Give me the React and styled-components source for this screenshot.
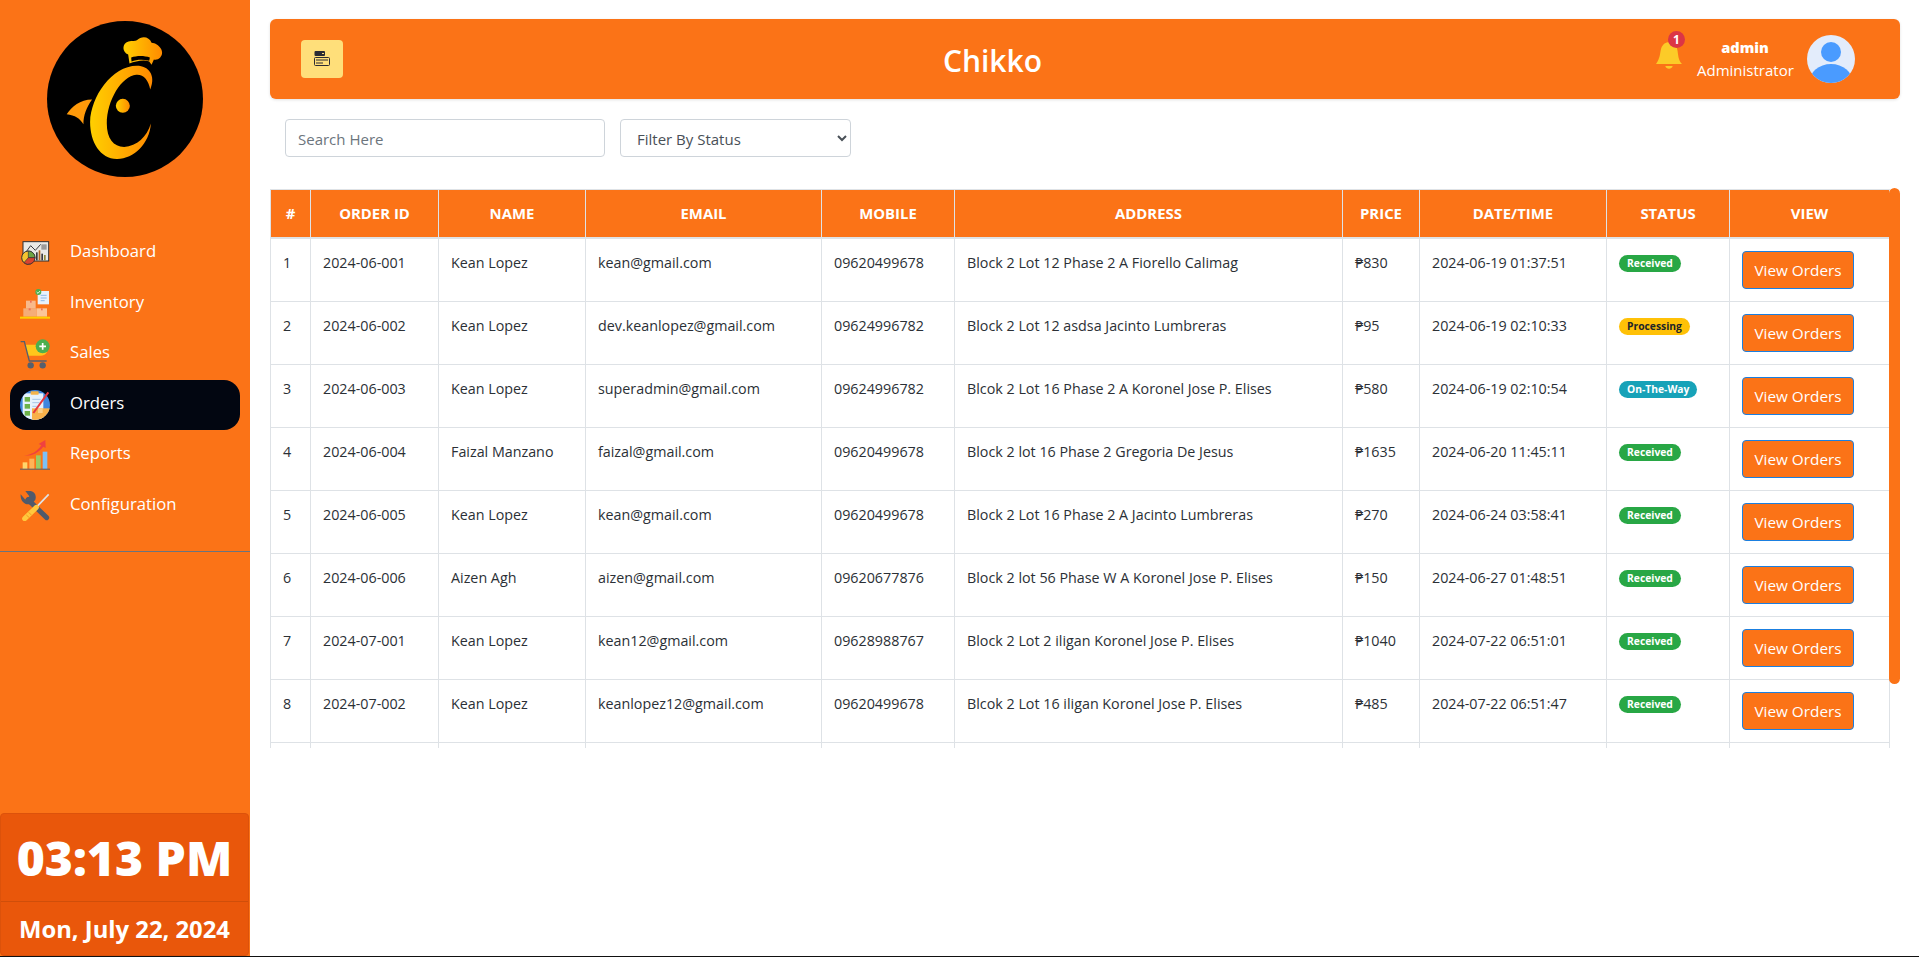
import React from 'react';
import styled, { createGlobalStyle } from 'styled-components';

const ORANGE = '#fb7317';
const LINE = '#dee2e6';

const GlobalStyle = createGlobalStyle`
  html, body { margin: 0; padding: 0; background: #fff; }
  body { font-family: "Open Sans", "Noto Sans", sans-serif; color: #212529; overflow: hidden; }
  * { box-sizing: border-box; }
`;

const Page = styled.div`
  display: flex;
  height: 957px;
  border-bottom: 1px solid #111;
`;

const Sidebar = styled.aside`
  width: 250px;
  flex: none;
  background: ${ORANGE};
  display: flex;
  flex-direction: column;
`;

const LogoWrap = styled.div`
  height: 228px;
  padding: 21px 0 0 47px;
`;

const Nav = styled.nav`
  display: grid;
  grid-auto-rows: 50.5px;
  padding: 0 10px;
`;

const NavItem = styled.a`
  height: 50px;
  display: flex;
  align-items: center;
  gap: 20px;
  padding-left: 10px;
  border-radius: 16px;
  color: #fff;
  font-size: 16.7px;
  background: ${p => (p.$active ? '#020611' : 'transparent')};
  svg { width: 30px; height: 30px; flex: none; }
  span { padding-bottom: 5px; }
`;

const SideRule = styled.hr`
  margin: 20px 0 0;
  border: 0;
  border-top: 1px solid #69747f;
`;

const Clock = styled.div`
  margin-top: auto;
  width: 249px;
  height: 143px;
  background: #e9570b;
  border: 1px solid #dc520b;
  border-radius: 4px;
  color: #fff;
  display: flex;
  flex-direction: column;
  text-align: center;
`;

const ClockTime = styled.div`
  height: 88px;
  border-bottom: 1px solid #cf4e0a;
  font-size: 48px;
  font-weight: 800;
  line-height: 88px;
  white-space: nowrap;
`;

const ClockDate = styled.div`
  font-size: 23.8px;
  font-weight: 700;
  line-height: 54px;
  white-space: nowrap;
`;

const Main = styled.main`
  flex: 1;
  min-width: 0;
  padding: 19px 19px 0 20px;
`;

const TopBar = styled.header`
  height: 80px;
  background: ${ORANGE};
  border-radius: 6px;
  box-shadow: 0 1px 3px rgba(0, 0, 0, 0.12);
  padding: 0 45px 0 31px;
  display: flex;
  align-items: center;
  justify-content: space-between;
`;

const ToggleButton = styled.button`
  width: 42px;
  height: 38px;
  padding: 0;
  border: 0;
  border-radius: 4px;
  background: #ffdf7a;
  display: flex;
  align-items: center;
  justify-content: center;
`;

const Title = styled.h1`
  margin: 3px 14px 0 0;
  color: #fff;
  font-size: 30px;
  font-weight: 600;
  line-height: 1;
`;

const UserArea = styled.div`
  display: flex;
  align-items: center;
`;

const BellWrap = styled.div`
  position: relative;
  width: 26px;
  height: 30px;
  margin: -10px 15px 0 0;
`;

const BellBadge = styled.span`
  position: absolute;
  top: -8px;
  left: 12px;
  width: 17px;
  height: 17px;
  border-radius: 50%;
  background: #dc3545;
  color: #fff;
  font-size: 12px;
  font-weight: 700;
  line-height: 17px;
  text-align: center;
`;

const UserText = styled.div`
  width: 96px;
  margin: -1px 14px 0 0;
  color: #fff;
  text-align: center;
  white-space: nowrap;
`;

const UserName = styled.div`
  font-size: 14.6px;
  font-weight: 800;
  line-height: 24px;
`;

const UserRole = styled.div`
  font-size: 15px;
  line-height: 23px;
`;

const Filters = styled.div`
  display: flex;
  gap: 15px;
  padding: 20px 0 0 15px;
`;

const SearchInput = styled.input`
  width: 320px;
  height: 38px;
  padding: 1px 12px 0;
  border: 1px solid #ced4da;
  border-radius: 4px;
  font: 15px "Open Sans", sans-serif;
  &::placeholder { color: #6c757d; opacity: 1; }
`;

const StatusSelect = styled.select`
  width: 231px;
  height: 38px;
  padding: 1px 12px 0;
  border: 1px solid #ced4da;
  border-radius: 4px;
  background: #fff;
  color: #495057;
  font: 15px "Open Sans", sans-serif;
`;

const TableArea = styled.div`
  position: relative;
  margin: 32px 0 0;
  width: 1630px;
`;

const TableScroll = styled.div`
  height: 559px;
  overflow-y: auto;
  scrollbar-width: none;
`;

const ScrollThumb = styled.div`
  position: absolute;
  top: -1px;
  right: 0;
  width: 11px;
  height: 496px;
  border-radius: 6px;
  background: ${ORANGE};
`;

const Table = styled.table`
  width: 1619px;
  table-layout: fixed;
  border-collapse: collapse;
  font-size: 14.3px;
`;

const Head = styled.th`
  height: 48px;
  padding: 0 4px;
  background: ${ORANGE};
  color: #fff;
  font-size: 14.9px;
  font-weight: 700;
  text-align: center;
  border: 1px solid ${LINE};
  border-bottom-width: 2px;
`;

const Cell = styled.td`
  height: 63px;
  padding: 13px 12px 11px;
  vertical-align: top;
  line-height: 21px;
  border: 1px solid ${LINE};
  white-space: nowrap;
  overflow: hidden;
  color: #2b3036;
`;

const ButtonCell = styled(Cell)`
  padding: 12px;
`;

const STATUS_COLOURS = {
  Received: { bg: '#28a745', fg: '#fff' },
  Processing: { bg: '#ffc107', fg: '#212529' },
  'On-The-Way': { bg: '#17a2b8', fg: '#fff' },
};

const StatusPill = styled.span`
  display: inline-block;
  margin-top: 3px;
  padding: 0 8px;
  height: 17px;
  border-radius: 9px;
  background: ${p => STATUS_COLOURS[p.$status].bg};
  color: ${p => STATUS_COLOURS[p.$status].fg};
  font-size: 10.3px;
  font-weight: 700;
  line-height: 17px;
  vertical-align: top;
`;

const ViewButton = styled.button`
  width: 112px;
  height: 38px;
  padding: 0;
  background: ${ORANGE};
  border: 1px solid #1a7fe0;
  border-radius: 4px;
  color: #fff;
  font: 15.3px "Open Sans", sans-serif;
`;

const COLUMNS = [
  ['#', 40], ['ORDER ID', 128], ['NAME', 147], ['EMAIL', 236], ['MOBILE', 133],
  ['ADDRESS', 388], ['PRICE', 77], ['DATE/TIME', 187], ['STATUS', 123], ['VIEW', 160],
];

const ORDERS = [
  ['2024-06-001', 'Kean Lopez', 'kean@gmail.com', '09620499678', 'Block 2 Lot 12 Phase 2 A Fiorello Calimag', '₱830', '2024-06-19 01:37:51', 'Received'],
  ['2024-06-002', 'Kean Lopez', 'dev.keanlopez@gmail.com', '09624996782', 'Block 2 Lot 12 asdsa Jacinto Lumbreras', '₱95', '2024-06-19 02:10:33', 'Processing'],
  ['2024-06-003', 'Kean Lopez', 'superadmin@gmail.com', '09624996782', 'Blcok 2 Lot 16 Phase 2 A Koronel Jose P. Elises', '₱580', '2024-06-19 02:10:54', 'On-The-Way'],
  ['2024-06-004', 'Faizal Manzano', 'faizal@gmail.com', '09620499678', 'Block 2 lot 16 Phase 2 Gregoria De Jesus', '₱1635', '2024-06-20 11:45:11', 'Received'],
  ['2024-06-005', 'Kean Lopez', 'kean@gmail.com', '09620499678', 'Block 2 Lot 16 Phase 2 A Jacinto Lumbreras', '₱270', '2024-06-24 03:58:41', 'Received'],
  ['2024-06-006', 'Aizen Agh', 'aizen@gmail.com', '09620677876', 'Block 2 lot 56 Phase W A Koronel Jose P. Elises', '₱150', '2024-06-27 01:48:51', 'Received'],
  ['2024-07-001', 'Kean Lopez', 'kean12@gmail.com', '09628988767', 'Block 2 Lot 2 iligan Koronel Jose P. Elises', '₱1040', '2024-07-22 06:51:01', 'Received'],
  ['2024-07-002', 'Kean Lopez', 'keanlopez12@gmail.com', '09620499678', 'Blcok 2 Lot 16 iligan Koronel Jose P. Elises', '₱485', '2024-07-22 06:51:47', 'Received'],
];

const Logo = () => (
  <svg width="156" height="156" viewBox="141 63 467 467">
    <defs>
      <linearGradient id="logoGold" x1="0" x2="1" y1="0" y2="0">
        <stop offset="0" stopColor="#ffd000" />
        <stop offset="1" stopColor="#ff8a00" />
      </linearGradient>
    </defs>
    <circle cx="374.5" cy="296.5" r="233.5" fill="#000" />
    <path fill="url(#logoGold)" d="M450 268C445 240 430 222 408 224C365 228 320 300 320 370C320 415 340 440 372 440C410 438 440 410 452 370C448 430 400 477 350 476C300 475 270 425 270 365C272 290 335 197 410 197C445 197 468 225 450 268Z" />
    <circle cx="368" cy="317" r="21" fill="url(#logoGold)" />
    <path fill="#ff9a0a" d="M276 298C240 298 215 320 200 342C225 345 240 355 250 372C250 345 260 320 276 298Z" />
    <path fill="url(#logoGold)" d="M384 163C366 156 364 130 385 124C396 122 405 124 410 121C425 106 447 110 454 128C476 130 496 155 480 172C474 178 466 180 461 178L454 194L447 184C430 178 405 184 388 190Z" />
    <path fill="#000" d="M393 172C410 166 432 166 449 172L447 182C430 178 410 178 394 184Z" />
  </svg>
);

const DashboardIcon = () => (
  <svg viewBox="60 55 90 90">
    <rect x="69" y="66" width="77" height="58" fill="#e9e9e6" stroke="#2f2f33" strokeWidth="3" />
    <polyline points="76,100 92,78 106,92 122,74" fill="none" stroke="#3a3a3e" strokeWidth="3" />
    <rect x="124" y="74" width="16" height="16" fill="#9a9a9a" />
    <rect x="108" y="98" width="5" height="24" fill="#3a3a3e" />
    <rect x="116" y="92" width="5" height="30" fill="#b5651d" />
    <rect x="124" y="102" width="5" height="20" fill="#3a3a3e" />
    <rect x="132" y="106" width="5" height="16" fill="#8f8a3b" />
    <circle cx="85" cy="114" r="20" fill="#f4c430" stroke="#2f2f33" strokeWidth="3" />
    <path d="M85 114V94A20 20 0 0 1 105 114Z" fill="#6da544" stroke="#2f2f33" strokeWidth="2" />
    <path d="M85 114H105A20 20 0 0 1 72 129Z" fill="#d9432f" stroke="#2f2f33" strokeWidth="2" />
  </svg>
);

const InventoryIcon = () => (
  <svg viewBox="60 205 90 90">
    <rect x="113" y="211" width="34" height="40" fill="#e8f1fb" />
    <path d="M122 224H140M122 232H140M122 240H134" stroke="#8db9e8" strokeWidth="3" />
    <circle cx="115" cy="214" r="9" fill="#4caf50" />
    <path d="M110 214l4 4 6-7" fill="none" stroke="#fff" strokeWidth="2.5" />
    <rect x="78" y="240" width="29" height="24" fill="#f8b98b" />
    <rect x="70" y="263" width="40" height="25" fill="#f5ad78" />
    <rect x="110" y="263" width="31" height="25" fill="#fbc598" />
    <rect x="90" y="240" width="5" height="6" fill="#ee6f57" />
    <rect x="86" y="263" width="6" height="6" fill="#ee6f57" />
    <rect x="123" y="263" width="5" height="6" fill="#ee6f57" />
    <rect x="60" y="288" width="90" height="6" fill="#ffd000" />
  </svg>
);

const SalesIcon = () => (
  <svg viewBox="60 358 90 90">
    <path d="M75 375H145L140 398C138 405 130 408 122 408H84Z" fill="#ffc61b" />
    <path d="M62 366H73L88 424H140" fill="none" stroke="#565f6d" strokeWidth="4" />
    <circle cx="92" cy="437" r="9.5" fill="#565f6d" />
    <circle cx="128" cy="437" r="9.5" fill="#565f6d" />
    <circle cx="128" cy="380" r="21" fill="#4caf50" />
    <path d="M128 370V390M118 380H138" stroke="#fff" strokeWidth="5" />
  </svg>
);

const OrdersIcon = () => (
  <svg viewBox="60 507 90 90">
    <clipPath id="ordersClip"><circle cx="105" cy="552" r="45" /></clipPath>
    <g clipPath="url(#ordersClip)">
      <rect x="60" y="507" width="90" height="90" fill="#3f86df" />
      <rect x="68" y="517" width="62" height="80" fill="#e6f2fd" />
      <rect x="92" y="511" width="24" height="10" rx="2" fill="#f3b44c" />
      <rect x="74" y="528" width="16" height="14" fill="#6cb24a" />
      <rect x="74" y="549" width="16" height="14" fill="#6cb24a" />
      <rect x="74" y="570" width="16" height="14" fill="#6cb24a" />
      <path d="M97 535H122M97 545H118M97 556H110" stroke="#a6c7e8" strokeWidth="3" />
      <rect x="96" y="562" width="54" height="36" fill="#f8b04a" />
      <rect x="114" y="562" width="14" height="14" fill="#fbd08a" />
    </g>
    <path d="M100 576L145 514" stroke="#e5383f" strokeWidth="6" />
  </svg>
);

const ReportsIcon = () => (
  <svg viewBox="60 660 90 90">
    <rect x="68" y="727" width="14" height="20" fill="#ffd66b" />
    <rect x="88" y="716" width="15" height="31" fill="#ffb457" />
    <rect x="108" y="706" width="14" height="41" fill="#9ccc65" />
    <rect x="128" y="695" width="14" height="52" fill="#7cc0f5" />
    <rect x="60" y="746" width="90" height="3" fill="#56606e" />
    <path d="M72 707C95 705 112 694 124 676L116 672L136 660L137 684L130 680C116 698 96 708 72 707Z" fill="#f0413f" />
  </svg>
);

const ConfigIcon = () => (
  <svg viewBox="60 812 90 90">
    <path d="M84 838L140 892" stroke="#505a6b" strokeWidth="15" strokeLinecap="round" />
    <path d="M62 822C60 842 75 858 96 850L106 838C112 818 96 808 76 812L88 828L76 838Z" fill="#505a6b" />
    <path d="M146 822L108 862" stroke="#dfe3e6" strokeWidth="5" />
    <path d="M109 861L74 895" stroke="#ffc83d" strokeWidth="15" strokeLinecap="round" />
    <path d="M86 876L95 885M79 884L88 892" stroke="#f59a23" strokeWidth="3" />
  </svg>
);

const ToggleIcon = () => (
  <svg width="16" height="16" viewBox="0 0 16 16">
    <rect x="0.5" y="0" width="10.5" height="5" rx="1" fill="#2b2b33" />
    <rect x="8" y="2" width="2" height="1" fill="#ffdf7a" />
    <rect x="0.5" y="6.5" width="15" height="8" rx="1" fill="none" stroke="#2b2b33" />
    <path d="M2 9H14M2 12H9" stroke="#2b2b33" />
  </svg>
);

const BellIcon = () => (
  <svg width="26" height="30" viewBox="50 58 78 90">
    <path fill="#fccb28" d="M50 133C62 118 62 100 65 88C70 72 80 68 89 68C100 68 112 75 114 90C117 105 116 120 128 133Z" />
    <path fill="#fccb28" d="M78 139H100C98 150 80 150 78 139Z" />
  </svg>
);

const Avatar = () => (
  <svg width="48" height="48" viewBox="0 0 48 48">
    <clipPath id="avatarClip"><circle cx="24" cy="24" r="24" /></clipPath>
    <g clipPath="url(#avatarClip)">
      <rect width="48" height="48" fill="#e3ecfb" />
      <circle cx="24" cy="17" r="10" fill="#4a9bff" />
      <ellipse cx="24" cy="48" rx="22" ry="19" fill="#4a9bff" />
    </g>
  </svg>
);

const NAV_ITEMS = [
  ['Dashboard', DashboardIcon],
  ['Inventory', InventoryIcon],
  ['Sales', SalesIcon],
  ['Orders', OrdersIcon],
  ['Reports', ReportsIcon],
  ['Configuration', ConfigIcon],
];

export default function App() {
  return (
    <Page>
      <GlobalStyle />
      <Sidebar>
        <LogoWrap><Logo /></LogoWrap>
        <Nav>
          {NAV_ITEMS.map(([label, Icon]) => (
            <NavItem key={label} $active={label === 'Orders'}>
              <Icon />
              <span>{label}</span>
            </NavItem>
          ))}
        </Nav>
        <SideRule />
        <Clock>
          <ClockTime>03:13 PM</ClockTime>
          <ClockDate>Mon, July 22, 2024</ClockDate>
        </Clock>
      </Sidebar>
      <Main>
        <TopBar>
          <ToggleButton><ToggleIcon /></ToggleButton>
          <Title>Chikko</Title>
          <UserArea>
            <BellWrap>
              <BellIcon />
              <BellBadge>1</BellBadge>
            </BellWrap>
            <UserText>
              <UserName>admin</UserName>
              <UserRole>Administrator</UserRole>
            </UserText>
            <Avatar />
          </UserArea>
        </TopBar>
        <Filters>
          <SearchInput placeholder="Search Here" />
          <StatusSelect defaultValue="">
            <option value="">Filter By Status</option>
          </StatusSelect>
        </Filters>
        <TableArea>
          <TableScroll>
            <Table>
              <colgroup>
                {COLUMNS.map(([name, width]) => <col key={name} width={width} />)}
              </colgroup>
              <thead>
                <tr>{COLUMNS.map(([name]) => <Head key={name}>{name}</Head>)}</tr>
              </thead>
              <tbody>
                {ORDERS.map((order, i) => (
                  <tr key={order[0]}>
                    <Cell>{i + 1}</Cell>
                    {order.slice(0, 7).map((value, j) => <Cell key={j}>{value}</Cell>)}
                    <Cell><StatusPill $status={order[7]}>{order[7]}</StatusPill></Cell>
                    <ButtonCell><ViewButton>View Orders</ViewButton></ButtonCell>
                  </tr>
                ))}
                <tr>{COLUMNS.map(([name]) => <Cell key={name} />)}</tr>
              </tbody>
            </Table>
          </TableScroll>
          <ScrollThumb />
        </TableArea>
      </Main>
    </Page>
  );
}
